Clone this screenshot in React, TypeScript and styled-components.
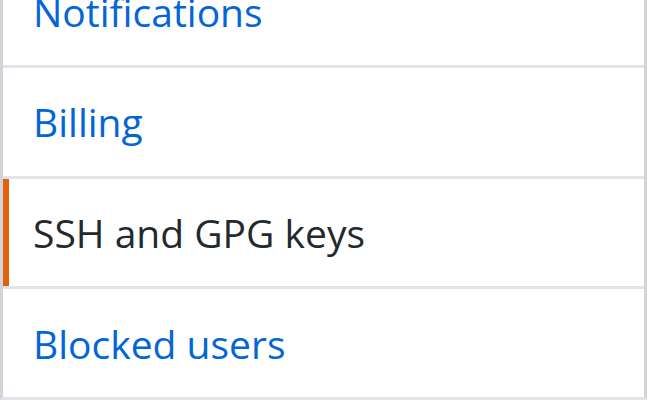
import React from "react";
import styled, { createGlobalStyle } from "styled-components";

const Global = createGlobalStyle`
  html, body { margin: 0; padding: 0; background: #ffffff; }
  body { width: 650px; height: 400px; overflow: hidden; font-family: "Open Sans", "Noto Sans", sans-serif; }
`;

const Menu = styled.nav`
  width: 647px;
  box-sizing: border-box;
  margin-top: -45.67px;
  border-left: 3px solid #d1d5da;
  border-right: 3px solid #d1d5da;
  border-bottom: 3px solid #e1e4e8;
  display: flex;
  flex-direction: column;
`;

const Item = styled.a<{ $selected?: boolean }>`
  box-sizing: border-box;
  height: 110.67px;
  display: flex;
  align-items: center;
  padding-left: 30px;
  border-top: 3px solid #e1e4e8;
  font-size: 39px;
  color: ${(p) => (p.$selected ? "#24292e" : "#0366d6")};
  text-decoration: none;
  box-shadow: ${(p) => (p.$selected ? "inset 6px 0 0 #e36209" : "none")};
  background: #ffffff;
`;

const items = [
  { label: "Notifications" },
  { label: "Billing" },
  { label: "SSH and GPG keys", selected: true },
  { label: "Blocked users" },
];

export default function App() {
  return (
    <>
      <Global />
      <Menu>
        {items.map((it) => (
          <Item key={it.label} href="#" $selected={it.selected}>
            {it.label}
          </Item>
        ))}
      </Menu>
    </>
  );
}
